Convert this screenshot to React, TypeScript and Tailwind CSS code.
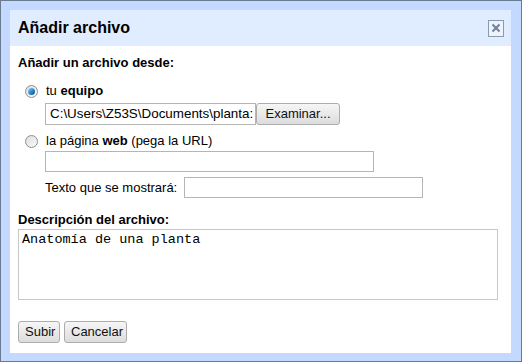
import React from "react";

const font = { fontFamily: '"Liberation Sans", Arial, sans-serif' };

const Radio = ({ checked }: { checked?: boolean }) => (
  <span className="relative inline-flex size-[13px] shrink-0 items-center justify-center rounded-full border border-[#8f8f8f] bg-gradient-to-br from-[#dcdcdc] to-[#fbfbfb]">
    {checked && (
      <span className="size-[7px] rounded-full bg-gradient-to-br from-[#9ad1f5] via-[#2a8ad4] to-[#0c4f8f]" />
    )}
  </span>
);

const GreyButton = ({ children, className = "" }: { children: React.ReactNode; className?: string }) => (
  <button
    className={`h-[22px] rounded-[3px] border border-[#acacac] bg-gradient-to-b from-[#f6f6f6] to-[#dcdcdc] px-[6px] text-[13px] leading-[18px] text-[#111] ${className}`}
  >
    {children}
  </button>
);

export default function App() {
  return (
    <div
      style={font}
      className="h-[362px] w-[522px] border border-[#6a7a90] bg-[#c3d9ff] pb-[8px] pl-[9px] pr-[10px] pt-[9px] text-[13px] text-black"
    >
      <div className="flex h-[343px] flex-col bg-white">
        {/* header */}
        <div className="flex h-[36px] shrink-0 items-center justify-between bg-[#e0ecff] pl-[8px] pr-[7px]">
          <span className="text-[16px] font-bold leading-[20px]">Añadir archivo</span>
          <span className="flex h-[17px] w-[16px] items-center justify-center border border-[#8a9ab0] bg-[#eef3fb]">
            <svg width="10" height="10" viewBox="0 0 10 10">
              <path d="M1.5 1.5 L8.5 8.5 M8.5 1.5 L1.5 8.5" stroke="#6e8098" strokeWidth="2" />
            </svg>
          </span>
        </div>

        {/* body */}
        <div className="flex flex-col px-[8px] pt-[9px]">
          <div className="text-[13px] font-bold leading-[16px]">Añadir un archivo desde:</div>

          <div className="ml-[7px] mt-[12px] flex items-center gap-[8px] leading-[16px]">
            <Radio checked />
            <span>
              tu <b>equipo</b>
            </span>
          </div>
          <div className="ml-[27px] mt-[4px] flex items-center">
            <div className="flex h-[22px] w-[211px] items-center overflow-hidden whitespace-nowrap border border-[#b5b5b5] pl-[4px] text-[13.4px]">
              C:\Users\Z53S\Documents\planta:
            </div>
            <GreyButton className="w-[84px]">Examinar...</GreyButton>
          </div>

          <div className="ml-[7px] mt-[8px] flex items-center gap-[8px] leading-[16px]">
            <Radio />
            <span>
              la página <b>web</b> (pega la URL)
            </span>
          </div>
          <div className="ml-[27px] mt-[2px] h-[21px] w-[329px] border border-[#b5b5b5]" />
          <div className="ml-[27px] mt-[5px] flex items-center gap-[7px]">
            <span className="leading-[16px]">Texto que se mostrará:</span>
            <div className="h-[21px] w-[239px] border border-[#b5b5b5]" />
          </div>

          <div className="mt-[14px] font-bold leading-[16px]">Descripción del archivo:</div>
          <div
            className="mt-[1px] h-[71px] w-[480px] border border-[#c8c8c8] px-[3px] pt-[2px] text-[13.5px] leading-[16px]"
            style={{ fontFamily: '"Liberation Mono", "Courier New", monospace' }}
          >
            Anatomía de una planta
          </div>

          <div className="mt-[21px] flex gap-[4px]">
            <GreyButton className="w-[42px]">Subir</GreyButton>
            <GreyButton className="w-[63px]">Cancelar</GreyButton>
          </div>
        </div>
      </div>
    </div>
  );
}
